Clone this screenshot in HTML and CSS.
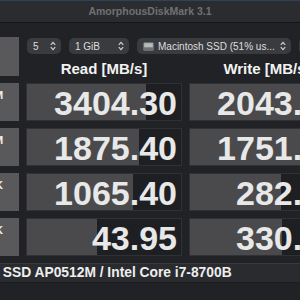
FILE: index.html
```html
<!DOCTYPE html>
<html lang="en">

<head>
    <meta charset="UTF-8">
    <meta name="viewport" content="width=device-width, initial-scale=1.0">
    <title>AmorphousDiskMark 3.1</title>
    <link rel="stylesheet" href="styles.css">
</head>

<body>
    <div class="titlebar">AmorphousDiskMark 3.1</div>

    <div id="window">
        <div class="board">
            <button class="all-button">All</button>

            <div class="controls">
                <div class="select select-count">
                    <span>5</span>
                    <svg class="chevron" width="6" height="10" viewBox="0 0 6 10"><path d="M0.8 3.8 L3 1.4 L5.2 3.8 M0.8 6.2 L3 8.6 L5.2 6.2" /></svg>
                </div>
                <div class="select select-size">
                    <span>1 GiB</span>
                    <svg class="chevron" width="6" height="10" viewBox="0 0 6 10"><path d="M0.8 3.8 L3 1.4 L5.2 3.8 M0.8 6.2 L3 8.6 L5.2 6.2" /></svg>
                </div>
                <div class="select select-disk">
                    <svg class="disk-icon" width="11" height="9" viewBox="0 0 11 9">
                        <rect x="0.5" y="0.5" width="10" height="8" rx="1" fill="#9a9ca0" />
                        <rect x="0.5" y="5.5" width="10" height="3" fill="#6d6f74" />
                        <rect x="1.5" y="1.5" width="8" height="3.5" fill="#b8babd" />
                    </svg>
                    <span>Macintosh SSD (51% us...</span>
                    <svg class="chevron" width="6" height="10" viewBox="0 0 6 10"><path d="M0.8 3.8 L3 1.4 L5.2 3.8 M0.8 6.2 L3 8.6 L5.2 6.2" /></svg>
                </div>
                <div class="select select-unit"><span>MB/s</span></div>
            </div>

            <div class="head">Read [MB/s]</div>
            <div class="head">Write [MB/s]</div>

            <button class="test-button">SEQ1M<br>QD8</button>
            <div class="result" style="--fill: 119px">3404.30</div>
            <div class="result" style="--fill: 113px">2043.05</div>

            <button class="test-button">SEQ1M<br>QD1</button>
            <div class="result" style="--fill: 112px">1875.40</div>
            <div class="result" style="--fill: 111px">1751.40</div>

            <button class="test-button">RND4K<br>QD64</button>
            <div class="result" style="--fill: 106px">1065.40</div>
            <div class="result" style="--fill: 91px">282.40</div>

            <button class="test-button">RND4K<br>QD1</button>
            <div class="result" style="--fill: 70px">43.95</div>
            <div class="result" style="--fill: 92px">330.95</div>
        </div>

        <div class="footer">APPLE SSD AP0512M / Intel Core i7-8700B</div>
    </div>
</body>

</html>
```

FILE: styles.css
```css
* {
    margin: 0;
    padding: 0;
    box-sizing: border-box;
}

body {
    background-color: #212225;
    font-family: "Liberation Sans", Arial, sans-serif;
    color: #e6e6e6;
    overflow: hidden;
}

.titlebar {
    height: 23px;
    background-color: #2b2c2f;
    border-top: 1px solid #2f4258;
    border-bottom: 1px solid #141517;
    color: #707174;
    font-size: 10.5px;
    font-weight: bold;
    line-height: 21px;
    text-align: center;
}

#window {
    width: 420px;
    margin-left: -51px;
    padding-top: 14px;
}

.board {
    display: grid;
    grid-template-columns: 70px 156px 156px;
    grid-template-rows: 17px 15px repeat(4, 38px);
    column-gap: 7px;
    row-gap: 7px;
}

button {
    border: none;
    outline: none;
    font-family: inherit;
    color: #f0f0f0;
    font-weight: bold;
    background-color: #59595c;
}

.all-button {
    grid-row: 1 / span 2;
    font-size: 12px;
}

.test-button {
    font-size: 11px;
    line-height: 13px;
}

/* Selects */
.controls {
    grid-column: 2 / span 2;
    display: flex;
    gap: 8px;
    padding-left: 1px;
    padding-top: 1px;
}

.select {
    flex-shrink: 0;
    height: 16px;
    display: flex;
    align-items: center;
    background-color: #3a3b3e;
    border-radius: 5px;
    font-size: 10px;
    color: #dedede;
    padding: 0 5px 0 6px;
    white-space: nowrap;
}

.select span {
    flex: 1;
}

.select-count {
    width: 34px;
}

.select-size {
    width: 60px;
}

.select-disk {
    width: 154px;
    padding-left: 6px;
}

.select-unit {
    width: 60px;
    padding-left: 10px;
}

.disk-icon {
    margin-right: 4px;
}

.chevron path {
    fill: none;
    stroke: #cfcfcf;
    stroke-width: 1.2;
}

/* Results */
.head {
    font-size: 15px;
    font-weight: bold;
    line-height: 15px;
    text-align: center;
    color: #f2f2f2;
}

.result {
    border: 1px solid #303135;
    background: linear-gradient(to right, #4a4a4d var(--fill), #1e1f22 var(--fill));
    font-size: 34px;
    font-weight: bold;
    line-height: 36px;
    padding-top: 1px;
    padding-right: 4px;
    text-align: right;
    color: #e8e8e8;
    overflow: hidden;
}

.footer {
    margin-top: 7px;
    height: 20px;
    background-color: #2a2b2e;
    border-top: 1px solid #38393c;
    border-bottom: 1px solid #1a1b1d;
    padding-left: 4px;
    font-size: 13.8px;
    font-weight: bold;
    line-height: 18px;
    color: #eeeeee;
    white-space: nowrap;
}
```
